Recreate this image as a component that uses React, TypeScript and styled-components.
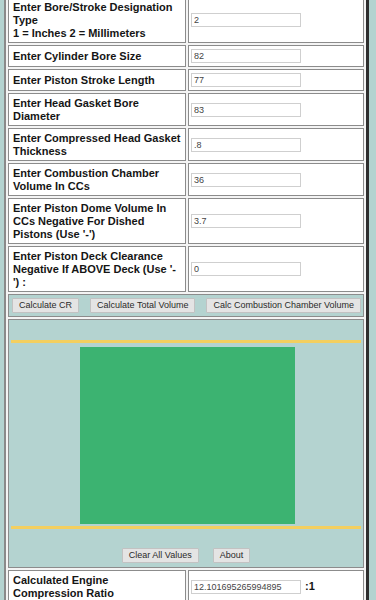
import React from "react";
import styled, { createGlobalStyle } from "styled-components";

const Global = createGlobalStyle`
  html, body { margin: 0; padding: 0; background: #b4d3d0; }
  body { font-family: "Liberation Sans", Arial, sans-serif; overflow: hidden; }
`;

const Page = styled.div`
  padding: 0 7px 0 4px;
  margin-top: -5px;
`;

const Table = styled.table`
  width: 365px;
  border-collapse: separate;
  border-spacing: 2px;
  background: #f4f4f4;
  border-left: 2px solid #8a8a8a;
  border-right: 3px solid #2e2e2e;
  border-top: 0;
  border-bottom: 0;
  table-layout: fixed;
`;

const LabelCell = styled.td`
  width: 168px;
  background: #fff;
  border: 1px solid #8c8c8c;
  padding: 3px 4px 2px;
  font-size: 11px;
  font-weight: bold;
  line-height: 13px;
  color: #151515;
  vertical-align: middle;
`;

const InputCell = styled.td`
  background: #fff;
  border: 1px solid #8c8c8c;
  padding: 3px 2px;
  vertical-align: middle;
`;

const InputWrap = styled.div`
  display: flex;
  align-items: center;
  gap: 4px;
`;

const TextInput = styled.input`
  display: block;
  box-sizing: border-box;
  width: 110px;
  height: 14px;
  margin: 0;
  border: 1px solid #cfcfcf;
  padding: 0 2px;
  font-family: "Liberation Sans", Arial, sans-serif;
  font-size: 9px;
  color: #444;
  background: #fff;
`;

const Suffix = styled.span`
  font-size: 11px;
  line-height: 13px;
  font-weight: bold;
  color: #151515;
`;

const ButtonCell = styled.td`
  background: #b4d3d0;
  border: 1px solid #8c8c8c;
  padding: 3px 2px 3px 3px;
`;

const ButtonRow = styled.div<{ $center?: boolean }>`
  display: flex;
  justify-content: ${(p) => (p.$center ? "center" : "space-between")};
  gap: ${(p) => (p.$center ? "14px" : "0")};
  align-items: center;
`;

const Button = styled.button`
  flex: none;
  white-space: nowrap;
  font-family: "Liberation Sans", Arial, sans-serif;
  font-size: 9px;
  color: #2a2a2a;
  background: #e4e4e4;
  border: 1px solid #c2c2c2;
  border-radius: 1px;
  height: 15px;
  margin: 0;
  padding: 0 6px;
  line-height: 13px;
`;

const PanelCell = styled.td`
  background: #b4d3d0;
  border: 1px solid #8c8c8c;
  padding: 0;
  height: 247px;
  vertical-align: top;
`;

const Drawing = styled.svg`
  display: block;
  width: 354px;
  height: 219px;
`;

const PanelButtons = styled(ButtonRow)`
  margin-top: 9px;
`;

const rows: { label: React.ReactNode; value: string }[] = [
  {
    label: (
      <>
        Enter Bore/Stroke Designation Type
        <br />1 = Inches 2 = Millimeters
      </>
    ),
    value: "2",
  },
  { label: "Enter Cylinder Bore Size", value: "82" },
  { label: "Enter Piston Stroke Length", value: "77" },
  { label: "Enter Head Gasket Bore Diameter", value: "83" },
  { label: "Enter Compressed Head Gasket Thickness", value: ".8" },
  { label: "Enter Combustion Chamber Volume In CCs", value: "36" },
  { label: "Enter Piston Dome Volume In CCs Negative For Dished Pistons (Use '-')", value: "3.7" },
  { label: "Enter Piston Deck Clearance Negative If ABOVE Deck (Use '-') :", value: "0" },
];

export default function App() {
  return (
    <Page>
      <Global />
      <Table>
        <tbody>
          {rows.map((r, i) => (
            <tr key={i}>
              <LabelCell>{r.label}</LabelCell>
              <InputCell>
                <InputWrap>
                  <TextInput defaultValue={r.value} />
                </InputWrap>
              </InputCell>
            </tr>
          ))}
          <tr>
            <ButtonCell colSpan={2}>
              <ButtonRow>
                <Button>Calculate CR</Button>
                <Button>Calculate Total Volume</Button>
                <Button>Calc Combustion Chamber Volume</Button>
              </ButtonRow>
            </ButtonCell>
          </tr>
          <tr>
            <PanelCell colSpan={2}>
              <Drawing viewBox="0 0 354 219">
                <rect x="2" y="20" width="350" height="3" fill="#f3cf5f" />
                <rect x="71" y="27" width="215" height="177" fill="#3cb371" />
                <rect x="2" y="206" width="350" height="3" fill="#f3cf5f" />
              </Drawing>
              <PanelButtons $center>
                <Button>Clear All Values</Button>
                <Button>About</Button>
              </PanelButtons>
            </PanelCell>
          </tr>
          <tr>
            <LabelCell>Calculated Engine Compression Ratio</LabelCell>
            <InputCell>
              <InputWrap>
                <TextInput defaultValue="12.101695265994895" />
                <Suffix>:1</Suffix>
              </InputWrap>
            </InputCell>
          </tr>
        </tbody>
      </Table>
    </Page>
  );
}
